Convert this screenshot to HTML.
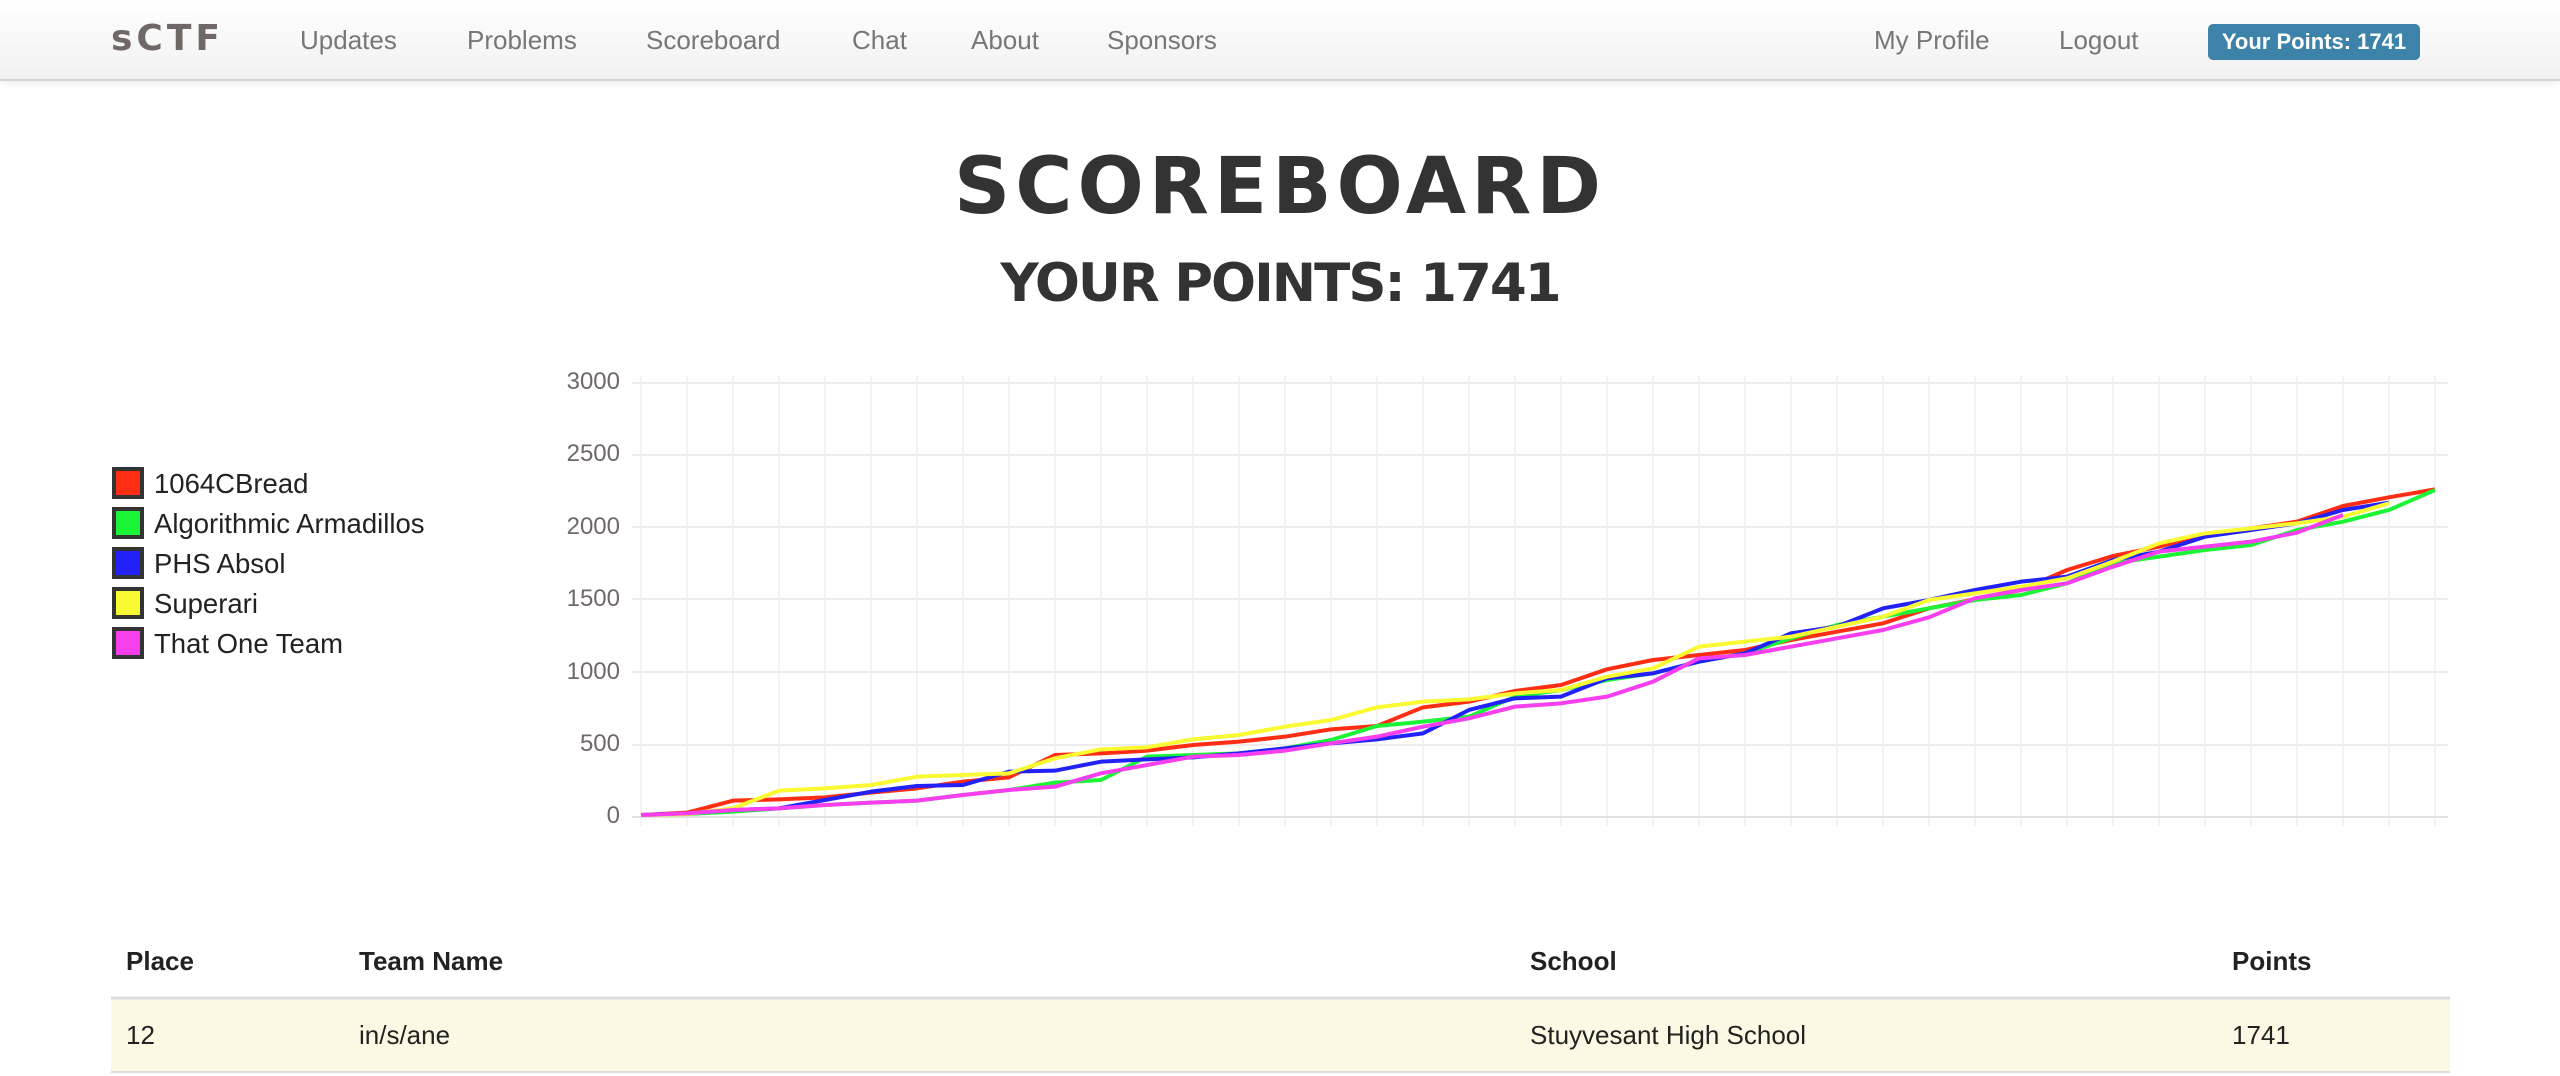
<!DOCTYPE html>
<html><head><meta charset="utf-8"><style>
*{margin:0;padding:0;box-sizing:border-box}
body{width:2560px;height:1076px;overflow:hidden;background:#fff;font-family:"Liberation Sans",sans-serif;position:relative;color:#333}
.nav{position:absolute;left:0;top:0;width:2560px;height:81px;background:linear-gradient(#fff,#f1f1f1);border-bottom:2px solid #d6d6d6;box-shadow:0 2px 6px rgba(0,0,0,.08)}
.nav span{position:absolute;top:25px;font-size:26px;color:#777}
.logo{font-family:"DejaVu Sans",sans-serif;font-weight:bold;font-size:36px!important;letter-spacing:4px;top:18px!important;color:#6f6866!important}
.badge{position:absolute;left:2208px;top:24px;width:212px;height:36px;background:#3c82a9;border-radius:5px;color:#fff;font-weight:bold;font-size:22px;text-align:center;line-height:36px}
h1{position:absolute;left:0;width:2560px;text-align:center;top:142px;font-family:"DejaVu Sans",sans-serif;font-weight:bold;font-size:78px;letter-spacing:5px;color:#333}
h2{position:absolute;left:0;width:2560px;text-align:center;top:253px;font-family:"DejaVu Sans",sans-serif;font-weight:bold;font-size:53px;letter-spacing:-2px;color:#333}
.leg{position:absolute;left:112px;font-size:27.5px;color:#222}
.leg i{position:absolute;left:0;top:0;width:32px;height:32px;border:4px solid #333}
.leg b{position:absolute;left:42px;top:1px;font-weight:normal;white-space:nowrap;line-height:32px}
.yl{position:absolute;width:100px;left:520px;text-align:right;font-size:24px;color:#6f6866}
.th{position:absolute;top:946px;font-size:26px;font-weight:bold;color:#222}
.td{position:absolute;top:1020px;font-size:26px;color:#222}
</style></head><body>
<div class="nav">
<span class="logo" style="left:111px">sCTF</span>
<span style="left:300px">Updates</span>
<span style="left:467px">Problems</span>
<span style="left:646px">Scoreboard</span>
<span style="left:852px">Chat</span>
<span style="left:971px">About</span>
<span style="left:1107px">Sponsors</span>
<span style="left:1874px">My Profile</span>
<span style="left:2059px">Logout</span>
<div class="badge">Your Points: 1741</div>
</div>
<h1>SCOREBOARD</h1>
<h2>YOUR POINTS: 1741</h2>

<div class="leg" style="top:467px"><i style="background:#ff2d14"></i><b>1064CBread</b></div>
<div class="leg" style="top:507px"><i style="background:#1cf436"></i><b>Algorithmic Armadillos</b></div>
<div class="leg" style="top:547px"><i style="background:#2121f8"></i><b>PHS Absol</b></div>
<div class="leg" style="top:587px"><i style="background:#fafa32"></i><b>Superari</b></div>
<div class="leg" style="top:627px"><i style="background:#f83ff0"></i><b>That One Team</b></div>

<div class="yl" style="top:368px">3000</div>
<div class="yl" style="top:440px">2500</div>
<div class="yl" style="top:513px">2000</div>
<div class="yl" style="top:585px">1500</div>
<div class="yl" style="top:658px">1000</div>
<div class="yl" style="top:730px">500</div>
<div class="yl" style="top:802px">0</div>

<svg style="position:absolute;left:0;top:0" width="2560" height="1076">
<g stroke="#ececec" stroke-width="2">
<line x1="632" y1="383" x2="2448" y2="383"/><line x1="632" y1="455" x2="2448" y2="455"/><line x1="632" y1="527" x2="2448" y2="527"/><line x1="632" y1="599" x2="2448" y2="599"/><line x1="632" y1="672" x2="2448" y2="672"/><line x1="632" y1="745" x2="2448" y2="745"/>
</g>
<g transform="translate(641,0)" stroke="#efefef" stroke-width="1.5">
<line x1="0" y1="376" x2="0" y2="826"/><line x1="46" y1="376" x2="46" y2="826"/><line x1="92" y1="376" x2="92" y2="826"/><line x1="138" y1="376" x2="138" y2="826"/><line x1="184" y1="376" x2="184" y2="826"/><line x1="230" y1="376" x2="230" y2="826"/><line x1="276" y1="376" x2="276" y2="826"/><line x1="322" y1="376" x2="322" y2="826"/><line x1="368" y1="376" x2="368" y2="826"/><line x1="414" y1="376" x2="414" y2="826"/><line x1="460" y1="376" x2="460" y2="826"/><line x1="506" y1="376" x2="506" y2="826"/><line x1="552" y1="376" x2="552" y2="826"/><line x1="598" y1="376" x2="598" y2="826"/><line x1="644" y1="376" x2="644" y2="826"/><line x1="690" y1="376" x2="690" y2="826"/><line x1="736" y1="376" x2="736" y2="826"/><line x1="782" y1="376" x2="782" y2="826"/><line x1="828" y1="376" x2="828" y2="826"/><line x1="874" y1="376" x2="874" y2="826"/><line x1="920" y1="376" x2="920" y2="826"/><line x1="966" y1="376" x2="966" y2="826"/><line x1="1012" y1="376" x2="1012" y2="826"/><line x1="1058" y1="376" x2="1058" y2="826"/><line x1="1104" y1="376" x2="1104" y2="826"/><line x1="1150" y1="376" x2="1150" y2="826"/><line x1="1196" y1="376" x2="1196" y2="826"/><line x1="1242" y1="376" x2="1242" y2="826"/><line x1="1288" y1="376" x2="1288" y2="826"/><line x1="1334" y1="376" x2="1334" y2="826"/><line x1="1380" y1="376" x2="1380" y2="826"/><line x1="1426" y1="376" x2="1426" y2="826"/><line x1="1472" y1="376" x2="1472" y2="826"/><line x1="1518" y1="376" x2="1518" y2="826"/><line x1="1564" y1="376" x2="1564" y2="826"/><line x1="1610" y1="376" x2="1610" y2="826"/><line x1="1656" y1="376" x2="1656" y2="826"/><line x1="1702" y1="376" x2="1702" y2="826"/><line x1="1748" y1="376" x2="1748" y2="826"/><line x1="1794" y1="376" x2="1794" y2="826"/>
</g>
<line x1="632" y1="817" x2="2448" y2="817" stroke="#e2e2e2" stroke-width="2"/>
<g transform="translate(641,360) scale(46,0.33333)" fill="none" stroke-width="4" stroke-linejoin="round">
<polyline vector-effect="non-scaling-stroke" stroke="#ff2d14" points="0,1365 1,1358 2,1322 3,1318 4,1312 5,1298 6,1285 7,1265 8,1252 9,1185 10,1180 11,1172 12,1155 13,1145 14,1130 15,1108 16,1098 17,1042 18,1025 19,993 20,975 21,928 22,900 23,885 24,870 25,840 26,815 27,790 28,745 29,718 30,690 31,630 32,588 33,560 34,525 35,505 36,485 37,438 38,412 39,388"/>
<polyline vector-effect="non-scaling-stroke" stroke="#1cf436" points="0,1365 1,1362 2,1355 3,1345 4,1335 5,1328 6,1322 7,1305 8,1290 9,1268 10,1260 11,1190 12,1185 13,1180 14,1165 15,1140 16,1098 17,1085 18,1070 19,1010 20,990 21,960 22,940 23,905 24,880 25,835 26,795 27,770 28,745 29,720 30,705 31,670 32,610 33,590 34,570 35,555 36,510 37,485 38,450 39,390"/>
<polyline vector-effect="non-scaling-stroke" stroke="#2121f8" points="0,1365 1,1360 2,1350 3,1345 4,1320 5,1295 6,1278 7,1275 8,1235 9,1232 10,1205 11,1198 12,1192 13,1180 14,1165 15,1150 16,1138 17,1120 18,1050 19,1015 20,1010 21,955 22,940 23,905 24,880 25,820 26,800 27,745 28,720 29,690 30,665 31,650 32,600 33,575 34,530 35,510 36,490 37,450 38,428"/>
<polyline vector-effect="non-scaling-stroke" stroke="#fafa32" points="0,1365 1,1362 2,1345 3,1292 4,1285 5,1275 6,1250 7,1245 8,1240 9,1195 10,1168 11,1162 12,1138 13,1125 14,1100 15,1080 16,1042 17,1025 18,1018 19,1000 20,990 21,950 22,925 23,860 24,845 25,830 26,800 27,770 28,720 29,700 30,680 31,655 32,605 33,550 34,520 35,505 36,490 37,470 38,430"/>
<polyline vector-effect="non-scaling-stroke" stroke="#f83ff0" points="0,1365 1,1360 2,1350 3,1345 4,1335 5,1328 6,1322 7,1305 8,1290 9,1280 10,1240 11,1215 12,1190 13,1185 14,1172 15,1150 16,1130 17,1100 18,1075 19,1040 20,1030 21,1010 22,965 23,895 24,885 25,860 26,835 27,810 28,772 29,715 30,690 31,670 32,620 33,575 34,560 35,545 36,518 37,465"/>
</g>
<rect x="111" y="998" width="2339" height="74" fill="#fcf8e3"/>
<line x1="111" y1="998" x2="2450" y2="998" stroke="#dddddd" stroke-width="3"/>
<line x1="111" y1="1072" x2="2450" y2="1072" stroke="#dddddd" stroke-width="2"/>
</svg>

<div class="th" style="left:126px">Place</div>
<div class="th" style="left:359px">Team Name</div>
<div class="th" style="left:1530px">School</div>
<div class="th" style="left:2232px">Points</div>
<div class="td" style="left:126px">12</div>
<div class="td" style="left:359px">in/s/ane</div>
<div class="td" style="left:1530px">Stuyvesant High School</div>
<div class="td" style="left:2232px">1741</div>
</body></html>
